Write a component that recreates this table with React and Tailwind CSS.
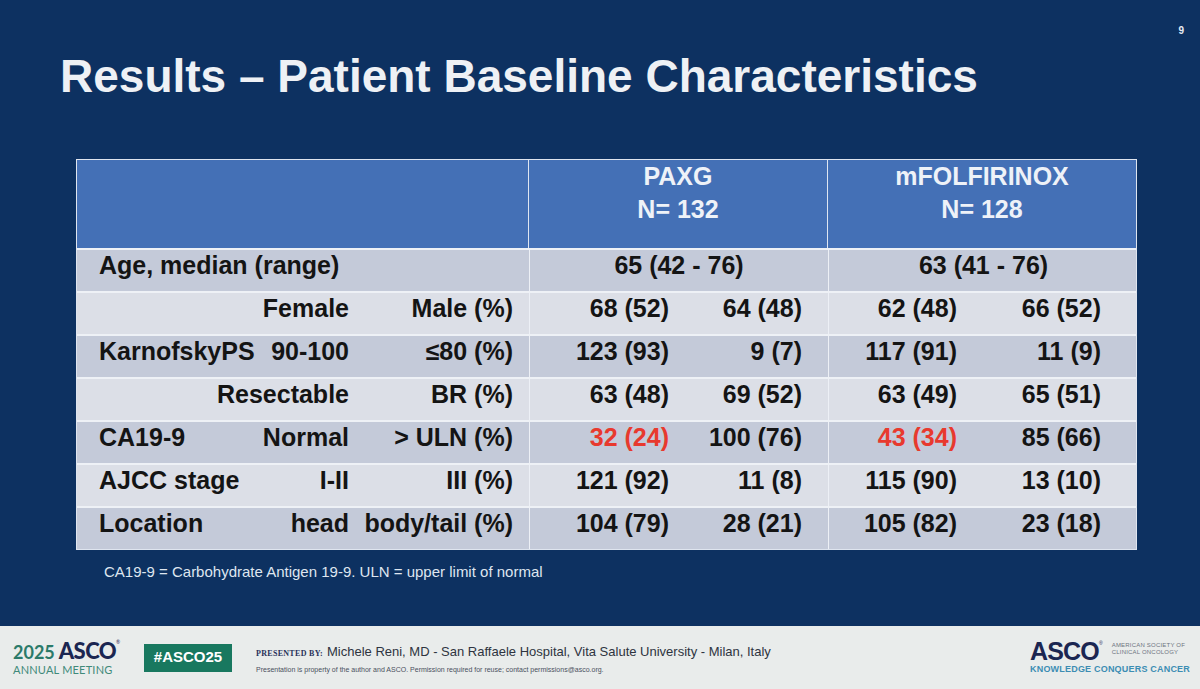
const rows = [
  { label: "Age, median (range)", a: "65 (42 - 76)", b: "63 (41 - 76)", span: true },
  { mid: "Female", right: "Male (%)", a: ["68 (52)", "64 (48)"], b: ["62 (48)", "66 (52)"] },
  { left: "KarnofskyPS", mid: "90-100", right: "≤80 (%)", a: ["123 (93)", "9 (7)"], b: ["117 (91)", "11 (9)"] },
  { mid: "Resectable", right: "BR (%)", a: ["63 (48)", "69 (52)"], b: ["63 (49)", "65 (51)"] },
  { left: "CA19-9", mid: "Normal", right: "> ULN (%)", a: ["32 (24)", "100 (76)"], b: ["43 (34)", "85 (66)"], red: true },
  { left: "AJCC stage", mid: "I-II", right: "III (%)", a: ["121 (92)", "11 (8)"], b: ["115 (90)", "13 (10)"] },
  { left: "Location", mid: "head", right: "body/tail (%)", a: ["104 (79)", "28 (21)"], b: ["105 (82)", "23 (18)"] },
];

// Label cell: left label, middle label right-aligned, right label right-aligned
const LabelCell = ({ row }) => (
  <div className="flex w-[452px] shrink-0 pl-[22px]">
    {row.span ? (
      <span>{row.label}</span>
    ) : (
      <>
        <div className="flex w-[250px] justify-between">
          <span>{row.left}</span>
          <span>{row.mid}</span>
        </div>
        <span className="w-[164px] text-right">{row.right}</span>
      </>
    )}
  </div>
);

const Pair = ({ vals, firstW, padR, red }) => (
  <div className="flex h-full flex-1 border-l border-[#edf0f6]">
    <span className={`text-right ${firstW} ${red ? "text-[#e8392e]" : ""}`}>{vals[0]}</span>
    <span className={`flex-1 text-right ${padR}`}>{vals[1]}</span>
  </div>
);

const TableRow = ({ row, i }) => (
  <div
    className={`flex h-[43px] border-t-2 border-[#eef1f6] text-[25px] font-bold leading-[30px] text-[#141414] ${
      i % 2 === 0 ? "bg-[#c4cad9]" : "bg-[#dcdfe7]"
    }`}
  >
    <LabelCell row={row} />
    {row.span ? (
      <>
        <div className="w-[299px] shrink-0 border-l border-[#edf0f6] text-center">{row.a}</div>
        <div className="w-[310px] shrink-0 border-l border-[#edf0f6] text-center">{row.b}</div>
      </>
    ) : (
      <>
        <div className="flex w-[299px] shrink-0">
          <Pair vals={row.a} firstW="w-[139px]" padR="pr-[26px]" red={row.red} />
        </div>
        <div className="flex w-[310px] shrink-0">
          <Pair vals={row.b} firstW="w-[128px]" padR="pr-[37px]" red={row.red} />
        </div>
      </>
    )}
  </div>
);

export default function App() {
  return (
    <div
      className="flex h-[689px] w-[1200px] flex-col overflow-hidden bg-[#0d3161]"
      style={{ fontFamily: '"Liberation Sans", Arial, sans-serif' }}
    >
      <div className="relative flex-1">
        <span className="absolute right-[16px] top-[23px] text-[10px] font-bold text-[#e6ebf3]">9</span>

        <h1 className="pl-[60px] pt-[53px] text-[46px] font-bold leading-[46px] text-[#eef1f5]">
          Results – Patient Baseline Characteristics
        </h1>

        <div className="ml-[76px] mt-[60px] w-[1061px] border border-[#dfe5ef]">
          <div className="flex h-[88px] bg-[#4470b6] text-[25px] font-bold leading-[33px] text-[#eef2f8]">
            <div className="w-[451px] shrink-0" />
            <div className="w-[299px] shrink-0 border-l border-[#dfe6f2] text-center">
              <div>PAXG</div>
              <div>N= 132</div>
            </div>
            <div className="flex-1 border-l border-[#dfe6f2] text-center">
              <div>mFOLFIRINOX</div>
              <div>N= 128</div>
            </div>
          </div>
          {rows.map((r, i) => (
            <TableRow key={i} row={r} i={i} />
          ))}
        </div>

        <p className="mt-[13px] pl-[104px] text-[15px] leading-[18px] text-[#dfe6f0]">
          CA19-9 = Carbohydrate Antigen 19-9. ULN = upper limit of normal
        </p>
      </div>

      {/* Footer */}
      <footer className="flex h-[63px] shrink-0 items-center bg-[#e9eceb] pl-[13px] pr-[10px]">
        <div className="flex w-[106px] flex-col" style={{ fontFamily: "Lato, sans-serif" }}>
          <div className="flex items-baseline leading-none">
            <span className="text-[18px] font-bold text-[#2b7a69]">2025</span>
            <span className="ml-[4px] text-[22px] font-black tracking-[-0.6px] text-[#1b2651]">ASCO</span>
            <span className="self-start text-[5px] text-[#1b2651]">®</span>
          </div>
          <span className="mt-[2px] text-[11px] leading-none tracking-[0.2px] text-[#3f8a7a]">ANNUAL MEETING</span>
        </div>

        <div className="ml-[25px] flex h-[28px] w-[88px] items-center justify-center bg-[#18785f] text-[15px] font-bold text-white">
          #ASCO25
        </div>

        <div className="ml-[24px] flex flex-col">
          <div className="flex items-baseline">
            <span className="text-[8px] font-bold tracking-[0.3px] text-[#28325a]" style={{ fontFamily: '"Liberation Serif", serif' }}>
              PRESENTED BY:
            </span>
            <span className="ml-[4px] text-[13px] text-[#2e3440]">
              Michele Reni, MD - San Raffaele Hospital, Vita Salute University - Milan, Italy
            </span>
          </div>
          <span className="mt-[4px] text-[7px] leading-none text-[#4a5060]">
            Presentation is property of the author and ASCO. Permission required for reuse; contact permissions@asco.org.
          </span>
        </div>

        <div className="ml-auto flex flex-col">
          <div className="flex items-start">
            <span className="text-[25px] font-bold leading-[21px] tracking-[-0.8px] text-[#1b2651]">ASCO</span>
            <span className="text-[5px] leading-none text-[#1b2651]">®</span>
            <div className="ml-[9px] flex flex-col pt-[1px] text-[6px] leading-[7px] tracking-[0.2px] text-[#6d7480]">
              <span>AMERICAN SOCIETY OF</span>
              <span>CLINICAL ONCOLOGY</span>
            </div>
          </div>
          <span className="mt-[3px] text-[9px] font-bold leading-none tracking-[0.2px] text-[#3c8db3]">
            KNOWLEDGE CONQUERS CANCER
          </span>
        </div>
      </footer>
    </div>
  );
}
